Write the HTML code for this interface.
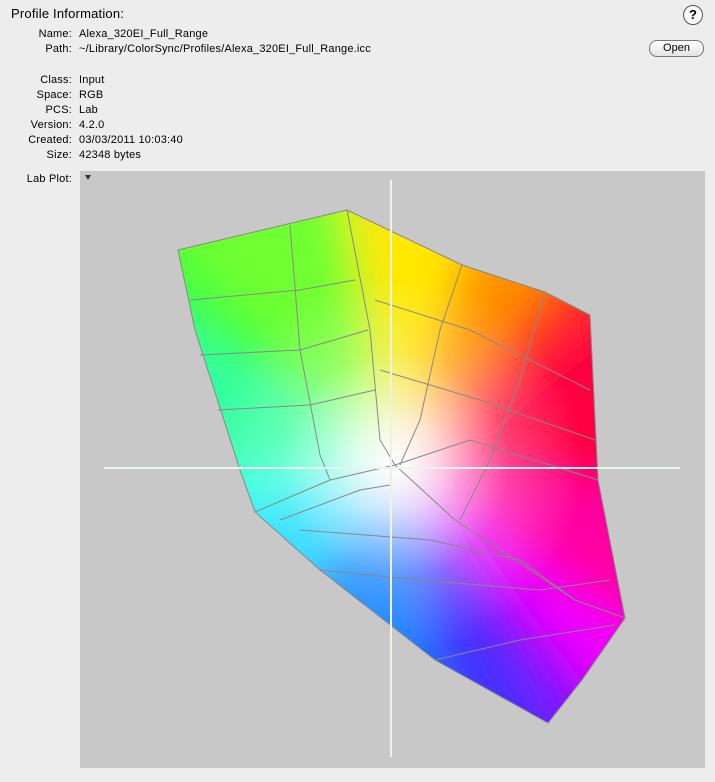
<!DOCTYPE html>
<html><head><style>
html,body{margin:0;width:715px;height:782px;overflow:hidden}
body{background:#ededed;font-family:"Liberation Sans",sans-serif;font-size:11px;color:#000;position:relative}
.t{position:absolute;white-space:nowrap;letter-spacing:0.2px}
.l{position:absolute;width:72px;text-align:right;white-space:nowrap;letter-spacing:0.2px}
</style></head><body>
<div class="t" style="left:11px;top:6px;font-size:13px">Profile Information:</div>
<div class="l" style="top:28px">Name:</div><div class="t" style="left:79px;top:28px">Alexa_320EI_Full_Range</div>
<div class="l" style="top:43px">Path:</div><div class="t" style="left:79px;top:43px">~/Library/ColorSync/Profiles/Alexa_320EI_Full_Range.icc</div>
<div class="l" style="top:74px">Class:</div><div class="t" style="left:79px;top:74px">Input</div>
<div class="l" style="top:89px">Space:</div><div class="t" style="left:79px;top:89px">RGB</div>
<div class="l" style="top:104px">PCS:</div><div class="t" style="left:79px;top:104px">Lab</div>
<div class="l" style="top:119px">Version:</div><div class="t" style="left:79px;top:119px">4.2.0</div>
<div class="l" style="top:134px">Created:</div><div class="t" style="left:79px;top:134px">03/03/2011 10:03:40</div>
<div class="l" style="top:149px">Size:</div><div class="t" style="left:79px;top:149px">42348 bytes</div>
<div class="l" style="top:173px">Lab Plot:</div>
<div style="position:absolute;left:683px;top:5px;width:18px;height:18px;border:1px solid #555;border-radius:50%;background:#fafafa;text-align:center;font-weight:bold;font-size:13px;line-height:18px">?</div>
<div style="position:absolute;left:649px;top:40px;width:53px;height:15px;border:1px solid #777;border-radius:8px;background:linear-gradient(#fff,#e4e4e4);text-align:center;line-height:15px">Open</div>
<svg style="position:absolute;left:80px;top:171px;overflow:hidden" width="625" height="597" viewBox="80 171 625 597">
<rect x="80" y="171" width="625" height="597" fill="#c8c8c8"/>
<polygon points="85,175 91,175 88,180" fill="#333"/>
<defs>
<clipPath id="c"><polygon points="178,250 347,210 462,265 545,292 590,315 598,480 625,618 582,680 548,723 435,660 320,570 255,512 240,470 195,330"/></clipPath>
<filter id="b" x="-50%" y="-50%" width="200%" height="200%"><feGaussianBlur stdDeviation="22"/></filter>
<radialGradient id="w" cx="395" cy="465" r="190" gradientUnits="userSpaceOnUse">
<stop offset="0" stop-color="#fff" stop-opacity="1"/>
<stop offset="0.25" stop-color="#fff" stop-opacity="0.75"/>
<stop offset="0.6" stop-color="#fff" stop-opacity="0.25"/>
<stop offset="1" stop-color="#fff" stop-opacity="0"/>
</radialGradient>
</defs>
<g clip-path="url(#c)">
<g filter="url(#b)">
<polygon points="395,465 48,121 318,57" fill="#70ff30"/>
<polygon points="395,465 318,57 502,145" fill="#ffe800"/>
<polygon points="395,465 502,145 635,188" fill="#ff9000"/>
<polygon points="395,465 635,188 707,225" fill="#ff3018"/>
<polygon points="395,465 707,225 720,489" fill="#ff0040"/>
<polygon points="395,465 720,489 763,710" fill="#ff00a0"/>
<polygon points="395,465 763,710 694,809" fill="#f000ff"/>
<polygon points="395,465 694,809 640,878" fill="#8010ff"/>
<polygon points="395,465 640,878 459,777" fill="#4030ff"/>
<polygon points="395,465 459,777 275,633" fill="#1080ff"/>
<polygon points="395,465 275,633 171,540" fill="#10d8ff"/>
<polygon points="395,465 171,540 147,473" fill="#30ffe8"/>
<polygon points="395,465 147,473 75,249" fill="#30ffa0"/>
<polygon points="395,465 75,249 48,121" fill="#40ff40"/>
</g>
<rect x="80" y="171" width="625" height="597" fill="url(#w)"/>
</g>
<g fill="none" stroke="#888" stroke-width="1">
<polygon points="178,250 347,210 462,265 545,292 590,315 598,480 625,618 582,680 548,723 435,660 320,570 255,512 240,470 195,330"/>
<path d="M347,210 L370,330 L380,440 L395,465 L455,520 L575,600 L625,618"/>
<path d="M395,465 L330,480 L255,512"/>
<path d="M290,225 L300,350 L320,455 L330,480"/>
<path d="M190,300 L300,290 L355,280"/>
<path d="M200,355 L300,350 L368,330"/>
<path d="M218,410 L310,405 L375,390"/>
<path d="M462,265 L440,330 L420,420 L400,465"/>
<path d="M545,292 L520,380 L490,460 L460,520"/>
<path d="M375,300 L470,330 L590,390"/>
<path d="M380,370 L480,400 L595,440"/>
<path d="M395,465 L470,440 L598,480"/>
<path d="M300,530 L430,540 L520,560 L575,600"/>
<path d="M320,570 L420,580 L540,590 L610,580"/>
<path d="M435,660 L520,640 L615,625"/>
<path d="M280,520 L360,490 L390,485"/>
</g>
<line x1="391" y1="180" x2="391" y2="757" stroke="#f4f0e0" stroke-width="2"/>
<line x1="104" y1="468" x2="680" y2="468" stroke="#e8f4f0" stroke-width="2"/>
</svg>
</body></html>
